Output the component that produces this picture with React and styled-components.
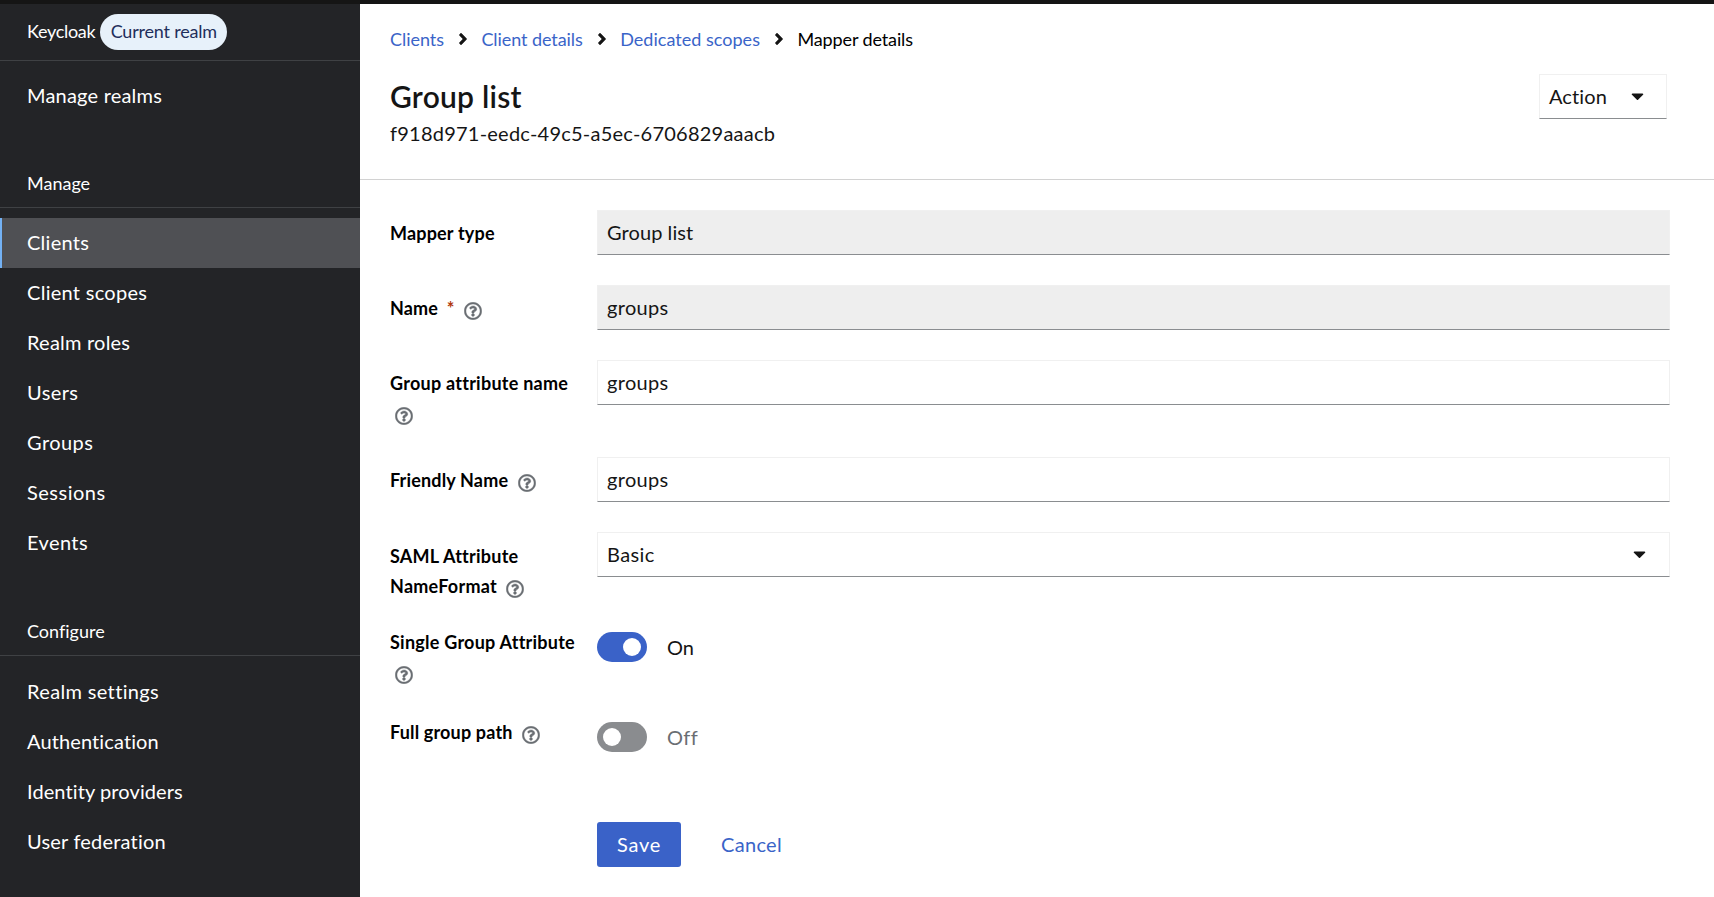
import React from "react";
import styled, { createGlobalStyle } from "styled-components";
import { FaAngleRight, FaCaretDown, FaRegQuestionCircle } from "react-icons/fa";

const GlobalStyle = createGlobalStyle`
  * { box-sizing: border-box; }
  body {
    margin: 0;
    background: #fff;
    color: #151515;
    font-family: Lato, "Liberation Sans", sans-serif;
    font-size: 20px;
    line-height: 24px;
    font-variant-ligatures: none;
  }
`;

const Page = styled.div`
  display: grid;
  grid-template: 4px 893px / 360px 1fr;
  overflow: hidden;
`;

const TopBar = styled.div`
  grid-column: 1 / -1;
  background: #151515;
`;

const Text = styled.span`
  letter-spacing: ${(p) => p.$track || 0}px;
`;

const Sidebar = styled.nav`
  background: #232427;
  color: #fff;
`;

const Realm = styled.div`
  display: flex;
  align-items: center;
  height: 57px;
  padding: 0 0 1px 27px;
  border-bottom: 1px solid #3f4144;
  font-size: 18px;
  line-height: 22px;
`;

const RealmName = styled.span`
  padding-bottom: 2px;
  letter-spacing: -0.3px;
`;

const RealmBadge = styled.span`
  height: 36px;
  width: 127px;
  margin-left: 5px;
  border-radius: 18px;
  background: #e7f1fa;
  color: #1f2f5c;
  line-height: 35px;
  text-align: center;
`;

const NavSection = styled.section`
  padding-top: ${(p) => p.$top || 0}px;
`;

const NavTitle = styled.h2`
  height: 44px;
  margin: 0 0 ${(p) => p.$gap}px;
  padding-left: 27px;
  border-bottom: 1px solid #3f4144;
  font-size: 18px;
  font-weight: 400;
  line-height: 38px;
`;

const NavItem = styled.a`
  display: flex;
  align-items: center;
  height: 50px;
  padding: 0 0 2px 25px;
  border-left: 2px solid ${(p) => (p.$current ? "#73b1f4" : "transparent")};
  background: ${(p) => (p.$current ? "#4f5054" : "transparent")};
`;

const Main = styled.main`
  background: #fff;
`;

const Header = styled.header`
  height: 176px;
  padding: 22px 47px 0 30px;
  border-bottom: 1px solid #d2d2d2;
`;

const Breadcrumb = styled.div`
  display: flex;
  align-items: center;
  height: 26px;
  font-size: 18px;
`;

const Crumb = styled.a`
  color: ${(p) => (p.$current ? "#000" : "#3a64c8")};
`;

const CrumbDivider = styled(FaAngleRight)`
  flex: none;
  width: 10px;
  height: 18px;
  margin: 0 13.5px 1px 14px;
  stroke: currentColor;
  stroke-width: 14px;
`;

const TitleRow = styled.div`
  display: flex;
  justify-content: space-between;
  margin-top: 22px;
`;

const Title = styled.h1`
  margin: 4px 0 0;
  font-size: 30px;
  font-weight: 600;
  line-height: 36px;
`;

const Subtitle = styled.div`
  margin-top: 7px;
`;

const Box = styled.div`
  display: flex;
  align-items: center;
  justify-content: space-between;
  height: 45px;
  width: ${(p) => p.$width || "100%"};
  padding: 0 ${(p) => p.$right || 9}px 2px 9px;
  border: 1px solid #f0f0f0;
  border-bottom-color: #8a8d90;
  background: ${(p) => (p.$disabled ? "#eeeeee" : "#fff")};
`;

const Caret = styled(FaCaretDown)`
  flex: none;
  width: 13px;
  height: 20px;
`;

const Form = styled.form`
  padding: 30px 44px 0 30px;
`;

const Row = styled.div`
  display: grid;
  grid-template-columns: 195px 1fr;
  column-gap: 12px;
  min-height: ${(p) => (p.$toggle ? 60 : 45)}px;
  margin-bottom: 30px;
`;

const Label = styled.label`
  margin-top: ${(p) => p.$top}px;
  height: ${(p) => p.$lines * 30 - 1}px;
  color: #000;
  font-size: 18px;
  font-weight: 700;
  line-height: 30px;
`;

const Required = styled.span`
  margin-left: 9px;
  color: #b1380b;
  font-size: 18px;
  line-height: 1;
`;

const HelpIcon = styled(FaRegQuestionCircle)`
  width: 18px;
  height: 18px;
  margin-left: 5px;
  vertical-align: -4.5px;
  color: #6a6e73;
  stroke: currentColor;
  stroke-width: 12px;
`;

const Toggle = styled.div`
  display: flex;
  align-items: center;
  gap: 20px;
  height: 30px;
  margin-top: 2px;
  color: ${(p) => (p.$on ? "#151515" : "#6a6e73")};
`;

const ToggleText = styled.span`
  padding-bottom: 1px;
  letter-spacing: ${(p) => p.$track}px;
`;

const Track = styled.span`
  display: flex;
  align-items: center;
  justify-content: ${(p) => (p.$on ? "flex-end" : "flex-start")};
  width: 50px;
  height: 30px;
  padding: 0 6px;
  border-radius: 15px;
  background: ${(p) => (p.$on ? "#3a62c8" : "#8a8c8f")};
`;

const Knob = styled.span`
  width: 18px;
  height: 18px;
  border-radius: 50%;
  background: #fff;
`;

const Actions = styled.div`
  display: flex;
  align-items: center;
  gap: 40px;
  margin: 42px 0 0 207px;
`;

const Button = styled.button`
  width: ${(p) => (p.$primary ? "84px" : "auto")};
  height: 45px;
  padding: 0 0 2px;
  border: 0;
  border-radius: 3px;
  background: ${(p) => (p.$primary ? "#3a62c8" : "transparent")};
  color: ${(p) => (p.$primary ? "#fff" : "#3a64c8")};
  font: inherit;
`;

const manageItems = [
  ["Clients", 0.25, true],
  ["Client scopes", 0.28],
  ["Realm roles", 0.22],
  ["Users", 0.4],
  ["Groups", 0.45],
  ["Sessions", 0.5],
  ["Events", 0.4],
];

const configureItems = [
  ["Realm settings", 0.35],
  ["Authentication", 0.12],
  ["Identity providers", 0.1],
  ["User federation", 0.2],
];

const crumbs = [
  ["Clients", -0.05],
  ["Client details", -0.08],
  ["Dedicated scopes", 0.03],
];

const fields = [
  { label: "Mapper type", track: 0.18, top: 8, value: "Group list", valueTrack: 0.08, disabled: true },
  { label: "Name", track: 0.1, top: 8, value: "groups", valueTrack: 0.31, disabled: true, required: true, help: true },
  { label: "Group attribute name", track: 0.25, top: 8, lines: 2, value: "groups", valueTrack: 0.31, help: true },
  { label: "Friendly Name", track: 0.16, top: 8, value: "groups", valueTrack: 0.31, help: true },
  { label: "SAML Attribute NameFormat", track: 0.25, top: 9, lines: 2, value: "Basic", valueTrack: 0.41, select: true, help: true },
  { label: "Single Group Attribute", track: 0.24, top: -3, lines: 2, toggle: true, on: true, help: true },
  { label: "Full group path", track: 0.16, top: -3, toggle: true, on: false, help: true },
];

function NavItems({ items }) {
  return items.map(([name, track, current]) => (
    <NavItem key={name} $current={current}>
      <Text $track={track}>{name}</Text>
    </NavItem>
  ));
}

function Field({ field }) {
  return (
    <Row $toggle={field.toggle}>
      <Label $top={field.top} $lines={field.lines || 1}>
        <Text $track={field.track}>{field.label}</Text>
        {field.required && <Required>*</Required>}{" "}
        {field.help && <HelpIcon />}
      </Label>
      {field.toggle ? (
        <Toggle $on={field.on}>
          <Track $on={field.on}><Knob /></Track>
          <ToggleText $track={field.on ? 0 : 0.39}>{field.on ? "On" : "Off"}</ToggleText>
        </Toggle>
      ) : (
        <Box $disabled={field.disabled} $right={field.select ? 23 : 9}>
          <Text $track={field.valueTrack}>{field.value}</Text>
          {field.select && <Caret />}
        </Box>
      )}
    </Row>
  );
}

export default function App() {
  return (
    <Page>
      <GlobalStyle />
      <TopBar />
      <Sidebar>
        <Realm>
          <RealmName>Keycloak</RealmName>
          <RealmBadge><Text $track={-0.2}>Current realm</Text></RealmBadge>
        </Realm>
        <NavSection $top={10}>
          <NavItems items={[["Manage realms", 0.2]]} />
        </NavSection>
        <NavSection $top={43}>
          <NavTitle $gap={10}>Manage</NavTitle>
          <NavItems items={manageItems} />
        </NavSection>
        <NavSection $top={44}>
          <NavTitle $gap={11}>Configure</NavTitle>
          <NavItems items={configureItems} />
        </NavSection>
      </Sidebar>
      <Main>
        <Header>
          <Breadcrumb>
            {crumbs.map(([name, track]) => (
              <React.Fragment key={name}>
                <Crumb><Text $track={track}>{name}</Text></Crumb>
                <CrumbDivider />
              </React.Fragment>
            ))}
            <Crumb $current><Text $track={-0.12}>Mapper details</Text></Crumb>
          </Breadcrumb>
          <TitleRow>
            <div>
              <Title><Text $track={0.25}>Group list</Text></Title>
              <Subtitle><Text $track={0.23}>f918d971-eedc-49c5-a5ec-6706829aaacb</Text></Subtitle>
            </div>
            <Box $width="128px" $right={22}>
              <Text $track={0.1}>Action</Text>
              <Caret />
            </Box>
          </TitleRow>
        </Header>
        <Form>
          {fields.map((field) => <Field key={field.label} field={field} />)}
          <Actions>
            <Button type="button" $primary><Text $track={0.77}>Save</Text></Button>
            <Button type="button"><Text $track={0.32}>Cancel</Text></Button>
          </Actions>
        </Form>
      </Main>
    </Page>
  );
}
